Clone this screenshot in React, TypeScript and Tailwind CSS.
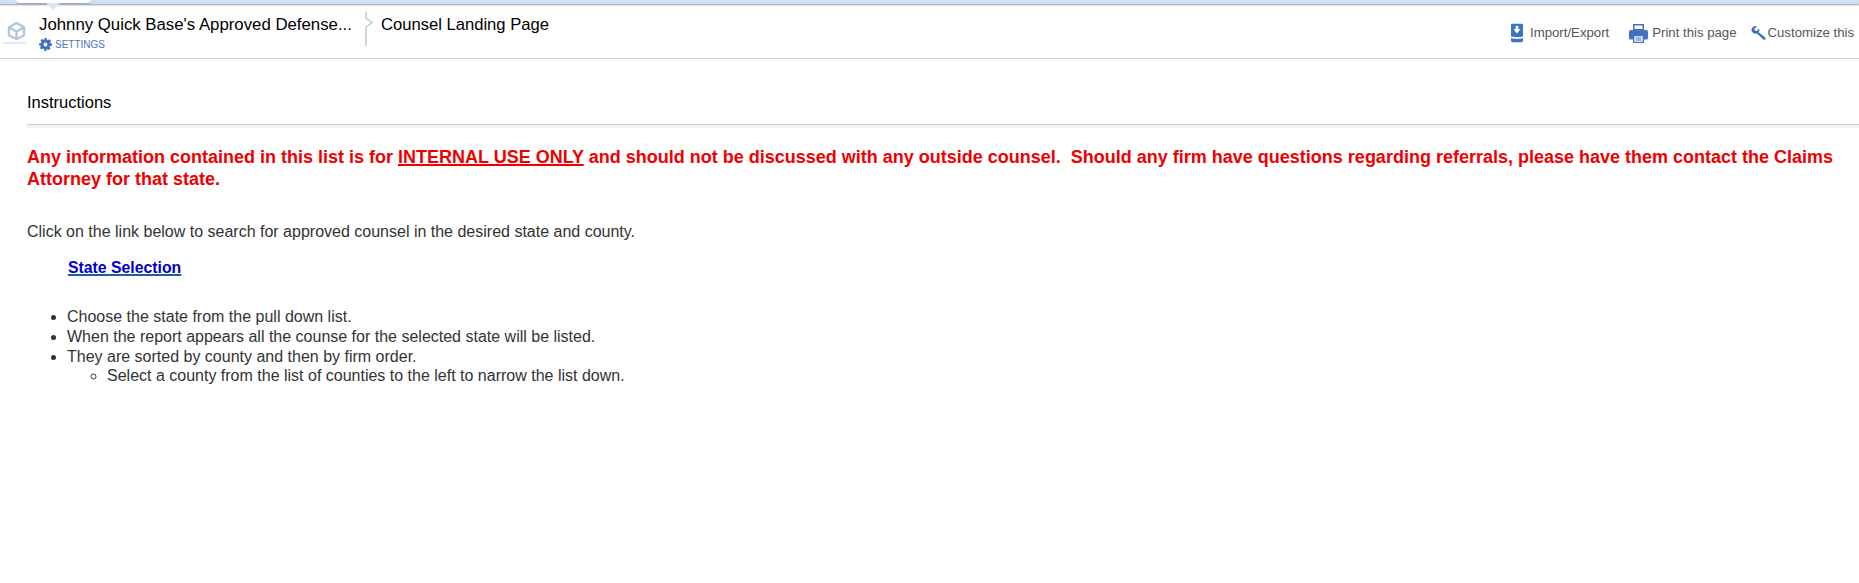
import React from "react";

function CubeIcon() {
  return (
    <svg width="19" height="20" viewBox="0 0 20 20" fill="none" stroke="#b4c5da" strokeWidth="2.400" strokeLinejoin="round">
      <path d="M10 1.500 L18 6 V14.500 L10 18.500 L2 14.500 V6 Z" />
      <path d="M2 6 L10 10.500 L18 6 M10 10.500 V18.500" />
    </svg>
  );
}

function GearIcon() {
  return (
    <svg width="13" height="13" viewBox="0 0 24 24" fill="#3f72c4">
      <path fillRule="evenodd" d="M10 0h4l.7 3.400 2 .8L19.500 2.300l2.800 2.800-1.700 2.800.8 2L24 10v4l-3.600.7-.8 2 1.700 2.800-2.800 2.800-2.800-1.700-2 .8L14 24h-4l-.7-3.600-2-.8-2.800 1.700-2.800-2.800 1.700-2.800-.8-2L0 14v-4l3.600-.7.8-2-1.700-2.800 2.800-2.800 2.800 1.700 2-.8zM12 8.500a3.500 3.500 0 1 0 0 7 3.500 3.500 0 0 0 0-7z" />
    </svg>
  );
}

function ImportIcon() {
  return (
    <svg width="12" height="20" viewBox="0 0 13 20" fill="#3f72c4">
      <path d="M1.500 0h10A1.500 1.500 0 0 1 13 1.500V13.500c-3 1.300-10 1.300-13 0V1.500A1.500 1.500 0 0 1 1.500 0z" />
      <path d="M5 2.500h3V6h2.300L6.500 10.500 2.700 6H5z" fill="#fff" />
      <path d="M0 15.500c3 1.300 10 1.300 13 0v3A1.500 1.500 0 0 1 11.500 20h-10A1.500 1.500 0 0 1 0 18.500z" />
    </svg>
  );
}

function PrintIcon() {
  return (
    <svg width="19" height="19" viewBox="0 0 19 19" fill="#3f72c4">
      <path fillRule="evenodd" d="M4 0h11v6H4zM5.500 1.500v3.500h8V1.500z" />
      <path d="M2 6h15a2 2 0 0 1 2 2v6a1.500 1.500 0 0 1-1.500 1.500h-16A1.500 1.500 0 0 1 0 14V8a2 2 0 0 1 2-2z" />
      <path d="M4 11h11v8H4z" fill="#fff" />
      <path fillRule="evenodd" d="M4 11h11v8H4zM5.300 12.300v5.400h8.400v-5.400z" />
      <path d="M6.500 13.500h6v1h-6zM6.500 15.500h6v1h-6z" />
    </svg>
  );
}

function WrenchIcon() {
  return (
    <svg width="15" height="14" viewBox="0 0 15 14" fill="#3f72c4">
      <path d="M4.800 0c.4 0 .8.100 1.100.2L3.500 2.600l.4 1.900 1.900.4L8.200 2.500c.5 1.300.2 2.800-.6 3.800l6.700 5.300a1.400 1.400 0 0 1-1.900 2L5.800 7.500A4 4 0 0 1 .6 2.800 4.200 4.200 0 0 1 4.800 0z" />
    </svg>
  );
}

export default function App() {
  return (
    <div className="min-h-[583px] bg-white font-['Liberation_Sans',Arial,sans-serif] overflow-hidden">
      {/* top strip */}
      <div className="relative h-[4px] bg-[#cfe0f0] shadow-[0_1px_2px_#8f9bab]">
        <div className="absolute left-[16px] top-0 w-[75px] h-[3px] bg-white rounded-b-[3px] shadow-[0_1px_1px_#9aa5b3]" />
        <div className="absolute left-[46px] top-[3px] border-x-[7px] border-t-[7px] border-x-transparent border-t-[#dbe6f0]" />
      </div>

      {/* header */}
      <div className="flex justify-between h-[55px] border-b border-[#cfcfcf]">
        <div className="flex">
          <div className="relative w-[39px] pl-[7px] pt-[17px] shrink-0">
            <CubeIcon />
            <div className="absolute left-[3px] top-[38px] w-[24px] h-[2px] bg-[#e6e9ee]" />
          </div>
          <div className="w-[316px] pt-[12px]">
            <div className="text-[16.8px] leading-[18px] text-black whitespace-nowrap">Johnny Quick Base's Approved Defense...</div>
            <div className="flex items-center gap-[3px] mt-[4px]">
              <GearIcon />
              <span className="text-[10px] leading-[13px] text-[#4a76c0]">SETTINGS</span>
            </div>
          </div>
          <svg width="10" height="34" viewBox="0 0 10 34" fill="none" stroke="#c8c8c8" strokeWidth="1.500" className="mt-[8px] ml-[10px]">
            <path d="M1 0 V6 L7 10.500 L1 15 V34" />
          </svg>
          <div className="ml-[6px] pt-[12px] text-[16.6px] leading-[18px] text-black whitespace-nowrap">Counsel Landing Page</div>
        </div>
        <div className="flex items-start pt-[19px] pr-[5px] text-[13.2px] leading-[20px] text-[#555] whitespace-nowrap">
          <div className="flex items-center h-[20px]">
            <ImportIcon />
            <span className="ml-[7px]">Import/Export</span>
          </div>
          <div className="flex items-center h-[20px] ml-[20px]">
            <PrintIcon />
            <span className="ml-[4px]">Print this page</span>
          </div>
          <div className="flex items-center h-[20px] ml-[14px]">
            <WrenchIcon />
            <span className="ml-[2px]">Customize this</span>
          </div>
        </div>
      </div>

      {/* content */}
      <div className="pl-[27px]">
        <div className="pt-[34px] pb-[13px] text-[16.500px] leading-[18px] text-black">Instructions</div>
        <div className="h-[4px] border-t border-[#cfcfcf] bg-[#f1f1f1]" />
        <p className="mt-[18px] pr-[10px] text-[18px] leading-[22px] font-bold text-[#ee0000] whitespace-pre-wrap">
          Any information contained in this list is for <u className="decoration-2">INTERNAL USE ONLY</u> and should not be discussed with any outside counsel.  Should any firm have questions regarding referrals, please have them contact the Claims Attorney for that state.
        </p>
        <p className="mt-[32px] text-[16px] leading-[20px] text-[#333]">
          Click on the link below to search for approved counsel in the desired state and county.
        </p>
        <div className="mt-[16px] ml-[41px] text-[15.800px] leading-[20px] font-bold">
          <a href="#" className="text-[#0000cc] underline decoration-2 decoration-[#1a5fa8]">State Selection</a>
        </div>
        <ul className="mt-[29px] ml-[40px] list-disc text-[16px] leading-[19.750px] text-[#333]">
          <li>Choose the state from the pull down list.</li>
          <li>When the report appears all the counse for the selected state will be listed.</li>
          <li>
            They are sorted by county and then by firm order.
            <ul className="ml-[40px] list-[circle]">
              <li>Select a county from the list of counties to the left to narrow the list down.</li>
            </ul>
          </li>
        </ul>
      </div>
    </div>
  );
}
